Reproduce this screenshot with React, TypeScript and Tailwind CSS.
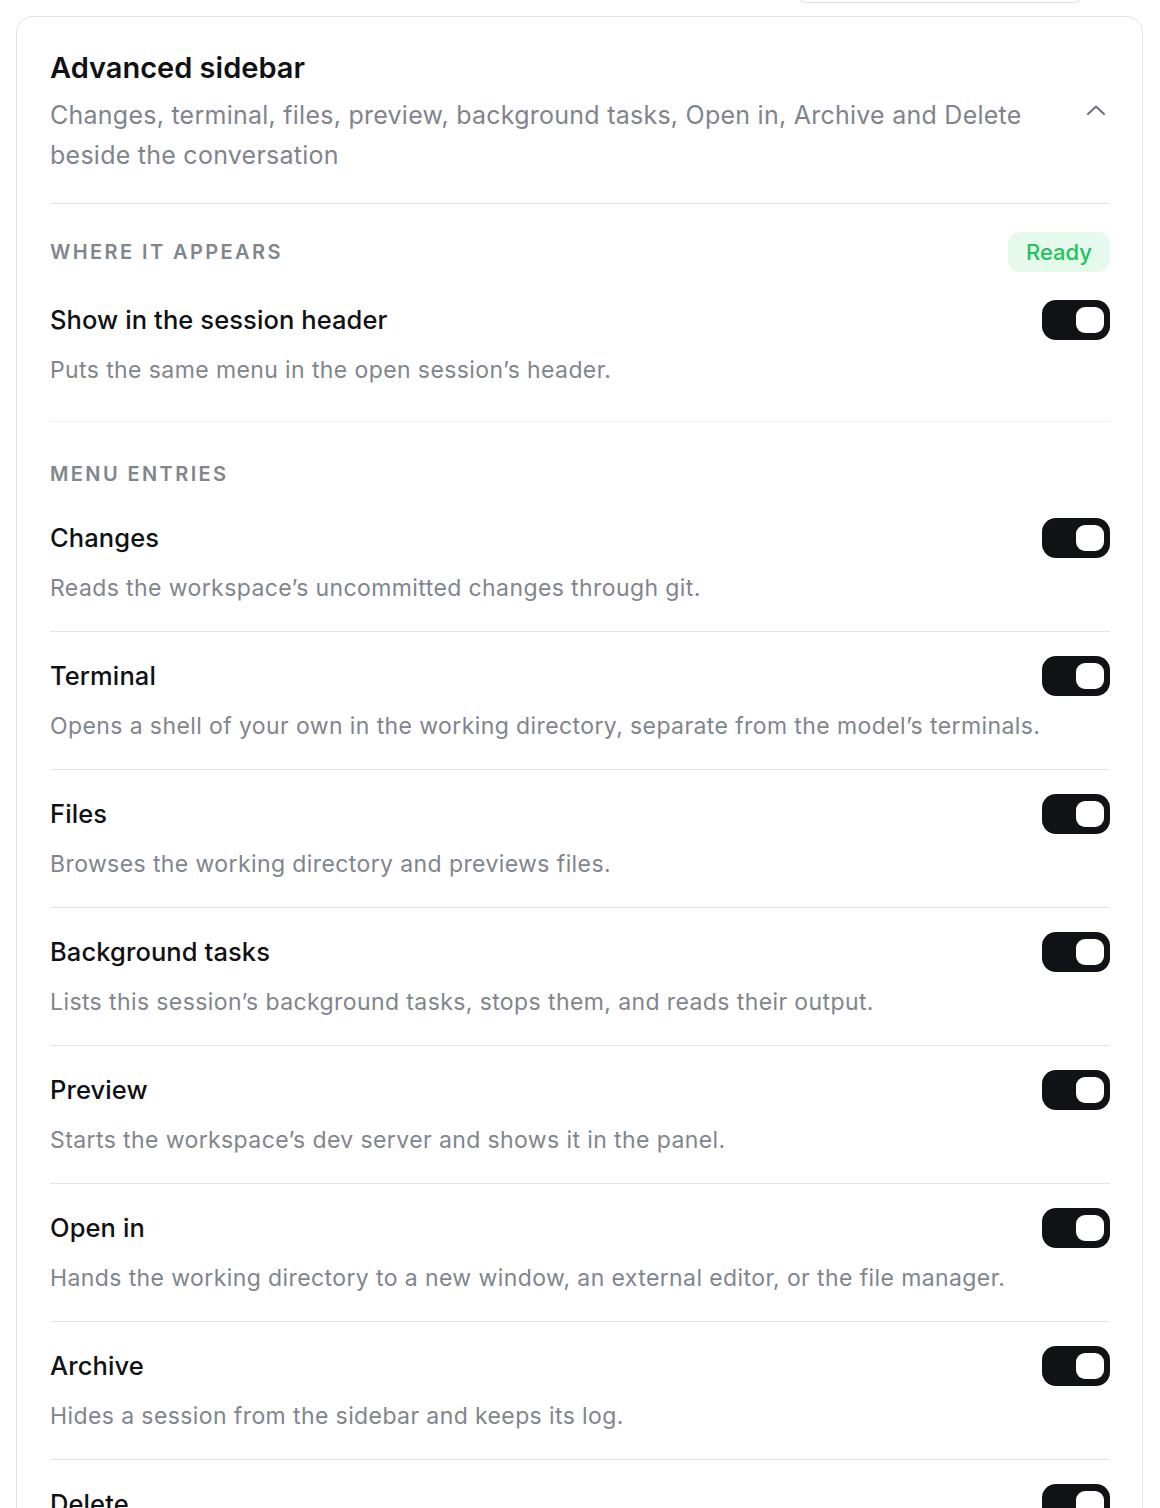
const entries = [
  { name: "Changes", desc: "Reads the workspace\u2019s uncommitted changes through git." },
  {
    name: "Terminal",
    desc: "Opens a shell of your own in the working directory, separate from the model\u2019s terminals.",
  },
  { name: "Files", desc: "Browses the working directory and previews files." },
  {
    name: "Background tasks",
    desc: "Lists this session\u2019s background tasks, stops them, and reads their output.",
  },
  { name: "Preview", desc: "Starts the workspace\u2019s dev server and shows it in the panel." },
  {
    name: "Open in",
    desc: "Hands the working directory to a new window, an external editor, or the file manager.",
  },
  { name: "Archive", desc: "Hides a session from the sidebar and keeps its log." },
  { name: "Delete", desc: "Removes the session and its log for good." },
];

function Toggle() {
  return (
    <div className="flex h-[40px] w-[68px] shrink-0 items-center justify-end rounded-[14px] bg-[#111215] pr-[6px]">
      <div className="h-[26px] w-[28px] rounded-[9px] bg-white" />
    </div>
  );
}

function Row({ name, desc }: { name: string; desc: string }) {
  return (
    <div>
      <div className="flex h-[40px] items-center justify-between">
        <span className="text-[25.5px] font-medium tracking-[0.1px] text-[#101114]">{name}</span>
        <Toggle />
      </div>
      <p className="mt-[12px] text-[23px] leading-[36px] tracking-[0.4px] text-[#80858e]">{desc}</p>
    </div>
  );
}

export default function App() {
  return (
    <div className="min-h-screen bg-white font-['Inter','Noto_Sans',sans-serif]">
      <div className="flex justify-end pr-[75px]">
        <div className="-mt-[20px] h-[23px] w-[290px] rounded-[14px] border border-[#dcdcdc]" />
      </div>
      <div className="ml-[16px] mr-[17px] mt-[13px] rounded-[16px] border border-[#e1e3ee] py-[33px] pl-[33px] pr-[32px]">
        <div className="flex items-start gap-[40px] border-b border-[#e4e4e7] pb-[28px]">
          <div className="flex-1">
            <h2 className="text-[29px] font-semibold leading-[36px] text-[#101114]">
              Advanced sidebar
            </h2>
            <p className="mt-[9px] text-[25px] leading-[40px] tracking-[0.25px] text-[#7f848d]">
              Changes, terminal, files, preview, background tasks, Open in, Archive and Delete
              beside the conversation
            </p>
          </div>
          <div className="mt-[54px] flex w-[28px] justify-center">
            <svg width="20" height="12" viewBox="0 0 20 12" fill="none">
              <path
                d="M2 10 L10 2.5 L18 10"
                stroke="#6b7079"
                strokeWidth="2"
                strokeLinecap="round"
                strokeLinejoin="round"
              />
            </svg>
          </div>
        </div>

        <div className="border-b border-[#f1f1f3] pb-[33px] pt-[28px]">
          <div className="flex h-[40px] items-center justify-between">
            <span className="text-[20px] font-semibold uppercase tracking-[0.12em] text-[#80868e]">
              Where it appears
            </span>
            <span className="flex h-[40px] w-[102px] items-center justify-center rounded-[12px] bg-[#e6f9ed] text-[22px] font-medium text-[#22c35a]">
              Ready
            </span>
          </div>
          <div className="mt-[28px]">
            <Row
              name="Show in the session header"
              desc={"Puts the same menu in the open session\u2019s header."}
            />
          </div>
        </div>

        <div className="pt-[32px]">
          <div className="flex h-[40px] items-center">
            <span className="text-[20px] font-semibold uppercase tracking-[0.12em] text-[#80868e]">
              Menu entries
            </span>
          </div>
          <div className="mt-[24px] flex flex-col">
            {entries.map((e, i) => (
              <div
                key={e.name}
                className={i === 0 ? "pb-[25px]" : "border-t border-[#e4e4e7] pb-[25px] pt-[24px]"}
              >
                <Row name={e.name} desc={e.desc} />
              </div>
            ))}
          </div>
        </div>
      </div>
    </div>
  );
}
